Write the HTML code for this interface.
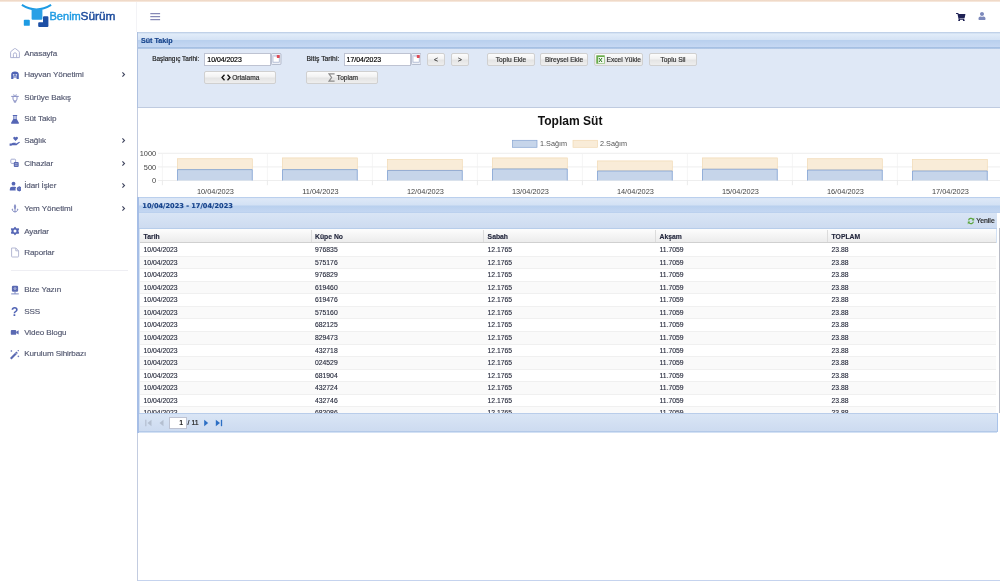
<!DOCTYPE html>
<html lang="tr">
<head>
<meta charset="utf-8">
<title>BenimSürüm - Süt Takip</title>
<style>
*{box-sizing:border-box;margin:0;padding:0}
html,body{width:1000px;height:581px;overflow:hidden;background:#fff;font-family:"Liberation Sans",sans-serif;}
body{position:relative;will-change:transform}
.abs{position:absolute}
#topline{left:0;top:0;width:1000px;height:2px;background:linear-gradient(#ecd3bf,#f9ede3)}
#sbborder{left:137px;top:33px;width:1.1px;height:548px;background:#c3cce0}
.mi{position:absolute;left:24.2px;font-size:8.1px;letter-spacing:-0.11px;color:#52576f;white-space:nowrap;line-height:10px;height:10px;-webkit-text-stroke:0.15px #52576f}
.chev{position:absolute;left:121px;width:5px;height:7px}
.ic{position:absolute;left:9px;width:12px;height:12px}
#divider{left:11px;top:270px;width:117px;height:1px;background:#eeeef3}
.ttl{color:#15428b;font-weight:bold;white-space:nowrap;-webkit-text-stroke:0.15px #15428b}
.btn{position:absolute;height:13px;border:1px solid #d0d0d0;border-radius:2px;background:linear-gradient(#fcfcfc 0%,#f2f2f2 45%,#e4e4e4 55%,#eeeeee 100%);font-size:6.6px;line-height:11px;text-align:center;color:#333;white-space:nowrap}
.inp{position:absolute;height:13px;border:1px solid #bec3d2;background:#fff;font-size:6.9px;line-height:11px;padding-left:2px;color:#000}
.trg{position:absolute;width:10.4px;height:12px;}
.lbl{position:absolute;font-size:6.5px;line-height:13px;color:#222;white-space:nowrap}
.row{position:absolute;left:140.2px;width:855.8px;height:12.575px;font-size:6.8px;line-height:12.5px;color:#262a3c;border-bottom:1px solid #f0f0f0}
.row.alt{background:#fafafa}
.row span{position:absolute;top:0;white-space:nowrap}
.c1{left:3.4px}.c2{left:174.8px}.c3{left:347.4px}.c4{left:519.4px}.c5{left:691.4px}
.hd{position:absolute;font-weight:bold;font-size:6.8px;line-height:12px;color:#22263c;white-space:nowrap}

.lbl,.btn,.inp{-webkit-text-stroke:0.18px currentColor}
.row,.hd{-webkit-text-stroke:0.12px currentColor}

</style>
</head>
<body>
<div id="topline" class="abs"></div>
<svg class="abs" style="left:20px;top:2px" width="100" height="28" viewBox="0 0 100 28">
<path d="M1.900,2.900 Q16.400,12 31.100,2.900" fill="none" stroke="#1e9be3" stroke-width="2.100"/>
<rect x="11.600" y="7" width="10.800" height="10.800" rx="1" fill="#2aa0e6"/>
<rect x="3.800" y="17.800" width="6" height="6" rx="0.900" fill="#1e9be3"/>
<path d="M24,14.200 h3.400 a1,1 0 0 1 1,1 v8.800 a1,1 0 0 1 -1,1 h-8.200 a1,1 0 0 1 -1,-1 v-2.800 a1,1 0 0 1 1,-1 h3.800 v-5 a1,1 0 0 1 1,-1z" fill="#1d4fa5"/>
<text x="29.500" y="17.900" font-family="Liberation Sans, sans-serif" font-size="11.800" fill="#1e9be3" stroke="#1e9be3" stroke-width="0.450" textLength="31.3" lengthAdjust="spacingAndGlyphs">Benim</text>
<text x="60.500" y="17.900" font-family="Liberation Sans, sans-serif" font-size="11.800" fill="#1b4a9c" stroke="#1b4a9c" stroke-width="0.450" textLength="35" lengthAdjust="spacingAndGlyphs">Sürüm</text>
</svg>
<svg class="abs" style="left:150px;top:13px" width="11" height="8" viewBox="0 0 11 8"><path d="M0.3,0.7h9.8M0.3,3.7h9.8M0.3,6.7h9.8" stroke="#6a6ea6" stroke-width="1"/></svg>
<svg class="abs" style="left:956.3px;top:12.5px" width="9.4" height="8.4" viewBox="0 0 576 512"><path fill="#1e2154" d="M528.12 301.319l47.273-208C578.806 78.301 567.391 64 551.99 64H159.208l-9.166-44.81C147.758 8.021 137.93 0 126.529 0H24C10.745 0 0 10.745 0 24v16c0 13.255 10.745 24 24 24h69.883l70.248 343.435C147.325 417.1 136 435.222 136 456c0 30.928 25.072 56 56 56s56-25.072 56-56c0-15.674-6.447-29.835-16.824-40h209.647C430.447 426.165 424 440.326 424 456c0 30.928 25.072 56 56 56s56-25.072 56-56c0-22.172-12.888-41.332-31.579-50.405l5.517-24.276c3.413-15.018-8.002-29.319-23.403-29.319H218.117l-6.545-32h293.145c11.206 0 20.92-7.754 23.403-18.681z"/></svg>
<svg class="abs" style="left:978px;top:12px" width="8" height="8" viewBox="0 0 448 512"><path fill="#7d89bb" d="M224 256c70.700 0 128-57.300 128-128S294.700 0 224 0 96 57.300 96 128s57.300 128 128 128zm89.600 32h-16.700c-22.200 10.200-46.900 16-72.900 16s-50.600-5.800-72.900-16h-16.700C60.200 288 0 348.200 0 422.400V464c0 26.500 21.500 48 48 48h352c26.500 0 48-21.500 48-48v-41.600c0-74.200-60.200-134.400-134.400-134.400z"/></svg>
<svg class="ic" style="top:47.3px" viewBox="0 0 12 12"><path d="M1.600,10.600V5.300Q1.600,4.700 2.100,4.300L5.400,1.700Q6,1.300 6.600,1.700L9.900,4.300Q10.400,4.700 10.400,5.300V10.600Z" fill="none" stroke="#a6acce" stroke-width="0.900" stroke-linejoin="round"/><path d="M4.400,10.600V7.400a1.600,1.600 0 0 1 3.200,0v3.200" fill="none" stroke="#a6acce" stroke-width="0.900"/></svg>
<div class="mi" style="top:48.6px">Anasayfa</div>
<svg class="ic" style="top:68.6px" viewBox="0 0 12 12"><path d="M2.200,10V5.600Q2.200,2.600 6,2.600Q9.800,2.600 9.800,5.600V10H7.600V8.600H4.400V10Z" fill="#4f64b6"/><circle cx="4.700" cy="5.800" r="0.900" fill="#dfe4f4"/><circle cx="7.300" cy="5.800" r="0.900" fill="#dfe4f4"/><path d="M4.200,7.600h3.600" stroke="#dfe4f4" stroke-width="0.600"/></svg>
<div class="mi" style="top:70.2px">Hayvan Yönetimi</div>
<svg class="chev" style="top:71.1px" viewBox="0 0 5 7"><path d="M1.400,1.300L3.500,3.500L1.400,5.700" fill="none" stroke="#3f445e" stroke-width="1.100"/></svg>
<svg class="ic" style="top:91.5px" viewBox="0 0 12 12"><path d="M2.200,4.400h7.600M4,4.400v2.600a2,2 0 0 0 4,0V4.400M4.700,2.400l0.800,2M7.300,2.400l-0.800,2M5.200,9v1.200h1.600V9" fill="none" stroke="#7f87c0" stroke-width="0.900" stroke-linejoin="round"/></svg>
<div class="mi" style="top:93.1px">Sürüye Bakış</div>
<svg class="ic" style="top:112.5px" viewBox="0 0 12 12"><path d="M3.800,1.900h4.400v1h-0.600v2.800l2.300,4a0.700,0.700 0 0 1 -0.600,1H2.700a0.700,0.700 0 0 1 -0.600,-1L4.400,5.700V2.900H3.800Z" fill="#5566b5"/><path d="M5.200,2.900h1.600v3h-1.600z" fill="#cfd5ee"/></svg>
<div class="mi" style="top:114.1px">Süt Takip</div>
<svg class="ic" style="top:134.5px" viewBox="0 0 12 12"><path d="M6.600,6L4.400,3.800a1.250,1.250 0 0 1 2.200,-1.300a1.250,1.250 0 0 1 2.200,1.300Z" fill="#5566b5"/><path d="M0.600,8.600h1.800l1.600,-0.900h2.900l-0.500,0.900h-1.600h2.400l3,-1.900l0.900,0.500l-3.600,3H3l-0.600,0.600H0.600Z" fill="#5566b5"/></svg>
<div class="mi" style="top:136.1px">Sağlık</div>
<svg class="chev" style="top:137.0px" viewBox="0 0 5 7"><path d="M1.400,1.300L3.500,3.500L1.400,5.700" fill="none" stroke="#3f445e" stroke-width="1.100"/></svg>
<svg class="ic" style="top:157.0px" viewBox="0 0 12 12"><rect x="1.800" y="2.200" width="4.800" height="4.200" rx="0.900" fill="none" stroke="#9aa1cd" stroke-width="0.900"/><rect x="4.800" y="5" width="4.900" height="4.900" rx="0.900" fill="#5b6ab3"/><path d="M5.900,6.700h2.700M5.900,8.300h2.700" stroke="#e4e7f5" stroke-width="0.500"/></svg>
<div class="mi" style="top:158.6px">Cihazlar</div>
<svg class="chev" style="top:159.5px" viewBox="0 0 5 7"><path d="M1.400,1.300L3.500,3.500L1.400,5.700" fill="none" stroke="#3f445e" stroke-width="1.100"/></svg>
<svg class="ic" style="top:179.5px" viewBox="0 0 12 12"><circle cx="4.500" cy="3.700" r="1.900" fill="#5566b5"/><path d="M0.800,10.600V9.200a2.400,2.400 0 0 1 2.400,-2.400h2.600a2.400,2.400 0 0 1 1.400,0.500a3.300,3.300 0 0 0 -0.500,3.300Z" fill="#5566b5"/><circle cx="10.300" cy="8.800" r="1.700" fill="none" stroke="#5566b5" stroke-width="1.300"/><path d="M10.300,6.200v5.200M7.700,8.800h5.200M8.500,7l3.600,3.600M12.100,7l-3.600,3.600" stroke="#5566b5" stroke-width="0.700"/></svg>
<div class="mi" style="top:181.1px">İdari İşler</div>
<svg class="chev" style="top:182.0px" viewBox="0 0 5 7"><path d="M1.400,1.300L3.500,3.500L1.400,5.700" fill="none" stroke="#3f445e" stroke-width="1.100"/></svg>
<svg class="ic" style="top:202.0px" viewBox="0 0 12 12"><path d="M6,2c1.600,1.700 1.600,3.900 0,5.600c-1.600,-1.700 -1.600,-3.900 0,-5.600z" fill="#8c94c8"/><path d="M6,10.400V6M6,9.800c-1.600,0 -2.700,-0.900 -2.900,-2.800l1,0.600M6,9.800c1.600,0 2.700,-0.900 2.900,-2.800l-1,0.600" fill="none" stroke="#7f88c0" stroke-width="0.900"/></svg>
<div class="mi" style="top:203.6px">Yem Yönetimi</div>
<svg class="chev" style="top:204.5px" viewBox="0 0 5 7"><path d="M1.400,1.300L3.500,3.500L1.400,5.700" fill="none" stroke="#3f445e" stroke-width="1.100"/></svg>
<svg class="ic" style="top:225.4px" viewBox="0 0 12 12"><path d="M6,1.600l1.300,1.700l2.100,-0.300l-0.800,2l0.800,2l-2.100,-0.300l-1.300,1.700l-1.300,-1.700l-2.100,0.300l0.800,-2l-0.800,-2l2.100,0.300z" transform="translate(0,1) scale(1,1)" fill="#5566b5" stroke="#5566b5" stroke-width="1.400" stroke-linejoin="round"/><circle cx="6" cy="6" r="1.500" fill="#fff"/></svg>
<div class="mi" style="top:226.6px">Ayarlar</div>
<svg class="ic" style="top:245.5px" viewBox="0 0 12 12"><path d="M2.600,2h4.200l2.800,2.800v5.600a0.600,0.600 0 0 1 -0.600,0.600h-5.800a0.600,0.600 0 0 1 -0.600,-0.600z" fill="none" stroke="#adb1cf" stroke-width="0.900" stroke-linejoin="round"/><path d="M6.800,2v2.800h2.800" fill="none" stroke="#adb1cf" stroke-width="0.900" stroke-linejoin="round"/></svg>
<div class="mi" style="top:247.6px">Raporlar</div>
<svg class="ic" style="top:283.5px" viewBox="0 0 12 12"><rect x="2.900" y="1.800" width="6.200" height="6" rx="1.200" fill="#5b6ab3"/><path d="M6,3v2.400M4.800,4.400L6,5.600L7.200,4.400" stroke="#e4e7f5" stroke-width="0.700" fill="none"/><path d="M6,7.800v1.800M2.200,9.900h7.600" stroke="#5b6ab3" stroke-width="0.800"/></svg>
<div class="mi" style="top:285.1px">Bize Yazın</div>
<svg class="ic" style="top:305.0px" viewBox="0 0 12 12"><text x="5.600" y="11.400" text-anchor="middle" font-family="Liberation Sans, sans-serif" font-weight="bold" font-size="12" fill="#5063b4">?</text></svg>
<div class="mi" style="top:306.6px">SSS</div>
<svg class="ic" style="top:326.0px" viewBox="0 0 12 12"><rect x="1.800" y="4" width="5.400" height="4.800" rx="0.900" fill="#5b6ab3"/><path d="M7.200,5.800L9.600,4.300v4.200L7.200,7z" fill="#5b6ab3"/></svg>
<div class="mi" style="top:327.6px">Video Blogu</div>
<svg class="ic" style="top:347.5px" viewBox="0 0 12 12"><path d="M1,10L7.400,3.600L8.900,5.100L2.500,11.500Z" fill="#5b6ab3"/><path d="M6.300,4.700l1.500,1.500" stroke="#fff" stroke-width="0.600"/><path d="M2.400,2.200v1.600M1.600,3h1.600M9.400,7.600v1.600M8.600,8.400h1.600M9.300,2v1.200M8.700,2.600h1.200" stroke="#5b6ab3" stroke-width="0.700"/></svg>
<div class="mi" style="top:349.1px">Kurulum Sihirbazı</div>
<div id="divider" class="abs"></div>
<div id="sbborder" class="abs"></div>
<div class="abs" style="left:136.3px;top:2px;width:1px;height:30px;background:#f3f3f6"></div>
<div class="abs" style="left:137px;top:32px;width:863px;height:17px;background:linear-gradient(to bottom,#b7c9e2 0,#c9d9ee 1px,#e1ecf9 2px,#d5e3f5 7.5px,#b9d0ee 8.5px,#c6d8f3 15px,#9fbbe0 15.6px,#9fbbe0 16.3px,#dfe8f6 17px)"></div>
<div class="abs ttl" style="left:141px;top:35.8px;font-size:7.15px;line-height:10px">Süt Takip</div>
<div class="abs" style="left:137px;top:49px;width:863px;height:58.6px;background:#dfe8f6;border-bottom:1px solid #bfcbe0"></div>
<div class="abs" style="left:137px;top:32px;width:1.4px;height:76px;background:#afc1e0"></div>
<div class="lbl" style="left:99.3px;width:100px;text-align:right;top:51.6px;font-size:6.45px">Başlangıç Tarihi:</div>
<div class="inp" style="left:204.3px;top:53px;width:66.8px">10/04/2023</div>
<div class="lbl" style="left:239.3px;width:100px;text-align:right;top:51.6px;font-size:6.8px">Bitiş Tarihi:</div>
<div class="inp" style="left:343.6px;top:53px;width:67.2px">17/04/2023</div>
<svg class="trg" style="left:271.4px;top:52.9px" viewBox="0 0 10 11" preserveAspectRatio="none"><rect x="0.400" y="0.400" width="9.200" height="10.200" rx="1" fill="#eef1f8" stroke="#aab1c4" stroke-width="0.800"/><rect x="1.900" y="2.600" width="6" height="5.800" fill="#fff" stroke="#97a3c4" stroke-width="0.600"/><rect x="1.900" y="2.300" width="6" height="1.300" fill="#d7dcec"/><rect x="5.600" y="1.800" width="2.800" height="2.700" rx="0.500" fill="#de4a55"/></svg>
<svg class="trg" style="left:410.9px;top:52.9px" viewBox="0 0 10 11" preserveAspectRatio="none"><rect x="0.400" y="0.400" width="9.200" height="10.200" rx="1" fill="#eef1f8" stroke="#aab1c4" stroke-width="0.800"/><rect x="1.900" y="2.600" width="6" height="5.800" fill="#fff" stroke="#97a3c4" stroke-width="0.600"/><rect x="1.900" y="2.300" width="6" height="1.300" fill="#d7dcec"/><rect x="5.600" y="1.800" width="2.800" height="2.700" rx="0.500" fill="#de4a55"/></svg>
<div class="btn" style="left:427px;top:53px;width:18px">&lt;</div>
<div class="btn" style="left:451px;top:53px;width:18px">&gt;</div>
<div class="btn" style="left:487px;top:53px;width:48px">Toplu Ekle</div>
<div class="btn" style="left:540px;top:53px;width:48px">Bireysel Ekle</div>
<div class="btn" style="left:594px;top:53px;width:49px;padding-left:10.5px">Excel Yükle</div>
<svg class="abs" style="left:596px;top:55px" width="9" height="9" viewBox="0 0 9 9"><rect x="0.300" y="0.300" width="8.400" height="8.400" fill="#69ad4c"/><rect x="2.200" y="2" width="6" height="6.300" fill="#f3f9ef"/><path d="M3,3l3,4M6,3L3,7" stroke="#2f7a22" stroke-width="1"/></svg>
<div class="btn" style="left:649px;top:53px;width:48px">Toplu Sil</div>
<div class="btn" style="left:204px;top:71px;width:72px;padding-left:11.5px">Ortalama</div>
<svg class="abs" style="left:221px;top:74px" width="10" height="7" viewBox="0 0 10 7"><path d="M3.500,0.800L1,3.500L3.500,6.200M6.500,0.800L9,3.500L6.500,6.200" fill="none" stroke="#111" stroke-width="1.300"/></svg>
<div class="btn" style="left:306px;top:71px;width:72px;padding-left:11px">Toplam</div>
<svg class="abs" style="left:327.8px;top:73px" width="7" height="9" viewBox="0 0 7 9"><path d="M6,1.500V0.800H1L3.600,4.500L1,8.200H6V7.500" fill="none" stroke="#8c8c8c" stroke-width="1.200"/></svg>
<svg class="abs" style="left:139px;top:108px" width="861" height="90" viewBox="139 108 861 90" font-family="Liberation Sans, sans-serif">
<text x="570.100" y="125.300" text-anchor="middle" font-size="12.050" font-weight="bold" fill="#111">Toplam Süt</text>
<rect x="512.500" y="140.300" width="24.500" height="7" fill="#c6d5ea" stroke="#86a4d2" stroke-width="0.700"/>
<text x="540" y="146.400" font-size="7.250" fill="#555">1.Sağım</text>
<rect x="573" y="140.300" width="24.500" height="7" fill="#f9ecd8" stroke="#f1d9b3" stroke-width="0.700"/>
<text x="600" y="146.400" font-size="7.250" fill="#555">2.Sağım</text>
<path d="M158,153.30H1000" stroke="#e6e6e6" stroke-width="0.700"/>
<text x="156.200" y="156.00" text-anchor="end" font-size="7.400" fill="#444">1000</text>
<path d="M158,166.90H1000" stroke="#e6e6e6" stroke-width="0.700"/>
<text x="156.200" y="169.60" text-anchor="end" font-size="7.400" fill="#444">500</text>
<path d="M158,180.50H1000" stroke="#e6e6e6" stroke-width="0.700"/>
<text x="156.200" y="183.20" text-anchor="end" font-size="7.400" fill="#444">0</text>
<path d="M162.40,153.30V180.50" stroke="#f1f1f1" stroke-width="0.700"/>
<path d="M162.40,180.50V185.2" stroke="#e2e2e2" stroke-width="0.700"/>
<path d="M267.40,153.30V180.50" stroke="#f1f1f1" stroke-width="0.700"/>
<path d="M267.40,180.50V185.2" stroke="#e2e2e2" stroke-width="0.700"/>
<path d="M372.40,153.30V180.50" stroke="#f1f1f1" stroke-width="0.700"/>
<path d="M372.40,180.50V185.2" stroke="#e2e2e2" stroke-width="0.700"/>
<path d="M477.40,153.30V180.50" stroke="#f1f1f1" stroke-width="0.700"/>
<path d="M477.40,180.50V185.2" stroke="#e2e2e2" stroke-width="0.700"/>
<path d="M582.40,153.30V180.50" stroke="#f1f1f1" stroke-width="0.700"/>
<path d="M582.40,180.50V185.2" stroke="#e2e2e2" stroke-width="0.700"/>
<path d="M687.40,153.30V180.50" stroke="#f1f1f1" stroke-width="0.700"/>
<path d="M687.40,180.50V185.2" stroke="#e2e2e2" stroke-width="0.700"/>
<path d="M792.40,153.30V180.50" stroke="#f1f1f1" stroke-width="0.700"/>
<path d="M792.40,180.50V185.2" stroke="#e2e2e2" stroke-width="0.700"/>
<path d="M897.40,153.30V180.50" stroke="#f1f1f1" stroke-width="0.700"/>
<path d="M897.40,180.50V185.2" stroke="#e2e2e2" stroke-width="0.700"/>
<path d="M1002.40,153.30V180.50" stroke="#f1f1f1" stroke-width="0.700"/>
<path d="M1002.40,180.50V185.2" stroke="#e2e2e2" stroke-width="0.700"/>
<rect x="177.50" y="158.74" width="74.800" height="10.88" fill="#f9ecd8" stroke="#f1d9b3" stroke-width="0.700"/>
<path d="M177.50,180.50V169.62H252.30V180.50Z" fill="#c6d5ea"/>
<path d="M177.50,180.50V169.62H252.30V180.50" fill="none" stroke="#7f9fd2" stroke-width="0.800"/>
<text x="215.40" y="194" text-anchor="middle" font-size="7.400" fill="#444">10/04/2023</text>
<rect x="282.50" y="157.92" width="74.800" height="11.70" fill="#f9ecd8" stroke="#f1d9b3" stroke-width="0.700"/>
<path d="M282.50,180.50V169.62H357.30V180.50Z" fill="#c6d5ea"/>
<path d="M282.50,180.50V169.62H357.30V180.50" fill="none" stroke="#7f9fd2" stroke-width="0.800"/>
<text x="320.40" y="194" text-anchor="middle" font-size="7.400" fill="#444">11/04/2023</text>
<rect x="387.50" y="159.56" width="74.800" height="10.88" fill="#f9ecd8" stroke="#f1d9b3" stroke-width="0.700"/>
<path d="M387.50,180.50V170.44H462.30V180.50Z" fill="#c6d5ea"/>
<path d="M387.50,180.50V170.44H462.30V180.50" fill="none" stroke="#7f9fd2" stroke-width="0.800"/>
<text x="425.40" y="194" text-anchor="middle" font-size="7.400" fill="#444">12/04/2023</text>
<rect x="492.50" y="157.92" width="74.800" height="11.02" fill="#f9ecd8" stroke="#f1d9b3" stroke-width="0.700"/>
<path d="M492.50,180.50V168.94H567.30V180.50Z" fill="#c6d5ea"/>
<path d="M492.50,180.50V168.94H567.30V180.50" fill="none" stroke="#7f9fd2" stroke-width="0.800"/>
<text x="530.40" y="194" text-anchor="middle" font-size="7.400" fill="#444">13/04/2023</text>
<rect x="597.50" y="160.92" width="74.800" height="10.06" fill="#f9ecd8" stroke="#f1d9b3" stroke-width="0.700"/>
<path d="M597.50,180.50V170.98H672.30V180.50Z" fill="#c6d5ea"/>
<path d="M597.50,180.50V170.98H672.30V180.50" fill="none" stroke="#7f9fd2" stroke-width="0.800"/>
<text x="635.40" y="194" text-anchor="middle" font-size="7.400" fill="#444">14/04/2023</text>
<rect x="702.50" y="157.92" width="74.800" height="11.29" fill="#f9ecd8" stroke="#f1d9b3" stroke-width="0.700"/>
<path d="M702.50,180.50V169.21H777.30V180.50Z" fill="#c6d5ea"/>
<path d="M702.50,180.50V169.21H777.30V180.50" fill="none" stroke="#7f9fd2" stroke-width="0.800"/>
<text x="740.40" y="194" text-anchor="middle" font-size="7.400" fill="#444">15/04/2023</text>
<rect x="807.50" y="158.74" width="74.800" height="11.29" fill="#f9ecd8" stroke="#f1d9b3" stroke-width="0.700"/>
<path d="M807.50,180.50V170.03H882.30V180.50Z" fill="#c6d5ea"/>
<path d="M807.50,180.50V170.03H882.30V180.50" fill="none" stroke="#7f9fd2" stroke-width="0.800"/>
<text x="845.40" y="194" text-anchor="middle" font-size="7.400" fill="#444">16/04/2023</text>
<rect x="912.50" y="159.56" width="74.800" height="11.42" fill="#f9ecd8" stroke="#f1d9b3" stroke-width="0.700"/>
<path d="M912.50,180.50V170.98H987.30V180.50Z" fill="#c6d5ea"/>
<path d="M912.50,180.50V170.98H987.30V180.50" fill="none" stroke="#7f9fd2" stroke-width="0.800"/>
<text x="950.40" y="194" text-anchor="middle" font-size="7.400" fill="#444">17/04/2023</text>
</svg>
<div class="abs" style="left:137px;top:197.3px;width:863px;height:235.5px;background:#d3e1f4"></div>
<div class="abs" style="left:137px;top:197.3px;width:863px;height:16px;background:linear-gradient(to bottom,#a9c3ea 0,#c5d7ef 0.8px,#dde8f7 1.6px,#d3e1f4 8px,#b9d0ee 9px,#c3d6f1 15px,#b3cbeb 16px)"></div>
<div class="abs ttl" style="left:142.3px;top:200.7px;font-size:6.62px;line-height:10px;font-family:'DejaVu Sans','Liberation Sans',sans-serif">10/04/2023 - 17/04/2023</div>
<div class="abs" style="left:138.6px;top:213.3px;width:858.4px;height:15.7px;background:linear-gradient(#d9e5f5,#cddbf0);border-bottom:1px solid #b7cdea"></div>
<div class="abs" style="left:997px;top:213.3px;width:3px;height:219.5px;background:#fff"></div>
<div class="abs" style="left:999.2px;top:228px;width:0.8px;height:185.3px;background:#b9bcc6"></div>
<svg class="abs" style="left:966.6px;top:217px" width="8" height="8" viewBox="0 0 8 8"><path d="M1,3.200A3,3 0 0 1 6.300,1.800L7.200,0.800V3.500H4.600L5.500,2.600A2,2 0 0 0 2.100,3.400Z" fill="#5ba53c"/><path d="M7,4.800A3,3 0 0 1 1.700,6.200L0.800,7.200V4.500H3.400L2.500,5.400A2,2 0 0 0 5.900,4.600Z" fill="#5ba53c"/></svg>
<div class="lbl" style="left:976.2px;top:214.3px;font-size:6.9px">Yenile</div>
<div class="abs" style="left:140.2px;top:229.2px;width:856.3px;height:13.8px;background:linear-gradient(#fdfdfd,#ececec);border-bottom:1px solid #d0d0d0"></div>
<div class="hd" style="left:143.6px;top:230.7px">Tarih</div>
<div class="hd" style="left:315px;top:230.7px">Küpe No</div>
<div class="hd" style="left:487.6px;top:230.7px">Sabah</div>
<div class="hd" style="left:659.6px;top:230.7px">Akşam</div>
<div class="hd" style="left:831.6px;top:230.7px">TOPLAM</div>
<div class="abs" style="left:311.2px;top:230px;width:1px;height:12px;background:#dcdcdc"></div>
<div class="abs" style="left:483.2px;top:230px;width:1px;height:12px;background:#dcdcdc"></div>
<div class="abs" style="left:655.2px;top:230px;width:1px;height:12px;background:#dcdcdc"></div>
<div class="abs" style="left:827.2px;top:230px;width:1px;height:12px;background:#dcdcdc"></div>
<div class="abs" style="left:140.2px;top:243px;width:856.8px;height:170.5px;background:#fff"></div>
<div class="abs" id="rowsclip" style="left:0;top:0;width:1000px;height:413.3px;overflow:hidden">
<div class="row" style="top:244.00px"><span class="c1">10/04/2023</span><span class="c2">976835</span><span class="c3">12.1765</span><span class="c4">11.7059</span><span class="c5">23.88</span></div>
<div class="row alt" style="top:256.57px"><span class="c1">10/04/2023</span><span class="c2">575176</span><span class="c3">12.1765</span><span class="c4">11.7059</span><span class="c5">23.88</span></div>
<div class="row" style="top:269.15px"><span class="c1">10/04/2023</span><span class="c2">976829</span><span class="c3">12.1765</span><span class="c4">11.7059</span><span class="c5">23.88</span></div>
<div class="row alt" style="top:281.73px"><span class="c1">10/04/2023</span><span class="c2">619460</span><span class="c3">12.1765</span><span class="c4">11.7059</span><span class="c5">23.88</span></div>
<div class="row" style="top:294.30px"><span class="c1">10/04/2023</span><span class="c2">619476</span><span class="c3">12.1765</span><span class="c4">11.7059</span><span class="c5">23.88</span></div>
<div class="row alt" style="top:306.88px"><span class="c1">10/04/2023</span><span class="c2">575160</span><span class="c3">12.1765</span><span class="c4">11.7059</span><span class="c5">23.88</span></div>
<div class="row" style="top:319.45px"><span class="c1">10/04/2023</span><span class="c2">682125</span><span class="c3">12.1765</span><span class="c4">11.7059</span><span class="c5">23.88</span></div>
<div class="row alt" style="top:332.02px"><span class="c1">10/04/2023</span><span class="c2">829473</span><span class="c3">12.1765</span><span class="c4">11.7059</span><span class="c5">23.88</span></div>
<div class="row" style="top:344.60px"><span class="c1">10/04/2023</span><span class="c2">432718</span><span class="c3">12.1765</span><span class="c4">11.7059</span><span class="c5">23.88</span></div>
<div class="row alt" style="top:357.18px"><span class="c1">10/04/2023</span><span class="c2">024529</span><span class="c3">12.1765</span><span class="c4">11.7059</span><span class="c5">23.88</span></div>
<div class="row" style="top:369.75px"><span class="c1">10/04/2023</span><span class="c2">681904</span><span class="c3">12.1765</span><span class="c4">11.7059</span><span class="c5">23.88</span></div>
<div class="row alt" style="top:382.32px"><span class="c1">10/04/2023</span><span class="c2">432724</span><span class="c3">12.1765</span><span class="c4">11.7059</span><span class="c5">23.88</span></div>
<div class="row" style="top:394.90px"><span class="c1">10/04/2023</span><span class="c2">432746</span><span class="c3">12.1765</span><span class="c4">11.7059</span><span class="c5">23.88</span></div>
<div class="row alt" style="top:407.48px"><span class="c1">10/04/2023</span><span class="c2">682086</span><span class="c3">12.1765</span><span class="c4">11.7059</span><span class="c5">23.88</span></div>
</div>
<div class="abs" style="left:138.6px;top:413.3px;width:859.4px;height:19.2px;background:linear-gradient(#d9e5f5,#cddbf0);border-top:1px solid #b9cdea;border-bottom:1px solid #b3c9e8;border-right:1px solid #a9c3ea"></div>
<svg class="abs" style="left:143px;top:417px" width="90" height="12" viewBox="0 0 90 12">
<path d="M2.800,2.800v6.400" stroke="#b4bfd0" stroke-width="1.200"/><path d="M8.500,2.800L4.500,6L8.500,9.200Z" fill="#b4bfd0"/>
<path d="M20.500,2.800L16.500,6L20.500,9.200Z" fill="#b4bfd0"/>
<path d="M61.200,2.800L65.200,6L61.200,9.200Z" fill="#2d6fc4"/>
<path d="M72.800,2.800L77,6L72.800,9.200Z" fill="#2d6fc4"/><path d="M78.500,2.800v6.400" stroke="#2d6fc4" stroke-width="1.300"/>
</svg>
<div class="inp" style="left:168.6px;top:417px;width:18px;height:11.6px;line-height:9.6px;text-align:right;padding-right:2.5px">1</div>
<div class="lbl" style="left:187.6px;top:417px;line-height:11.6px;font-size:6.9px">/ 11</div>
<div class="abs" style="left:137px;top:197.3px;width:1.5px;height:235.5px;background:#a6bee6"></div>
<div class="abs" style="left:138px;top:579.7px;width:862px;height:1.3px;background:#c5d3ee"></div>
</body>
</html>
